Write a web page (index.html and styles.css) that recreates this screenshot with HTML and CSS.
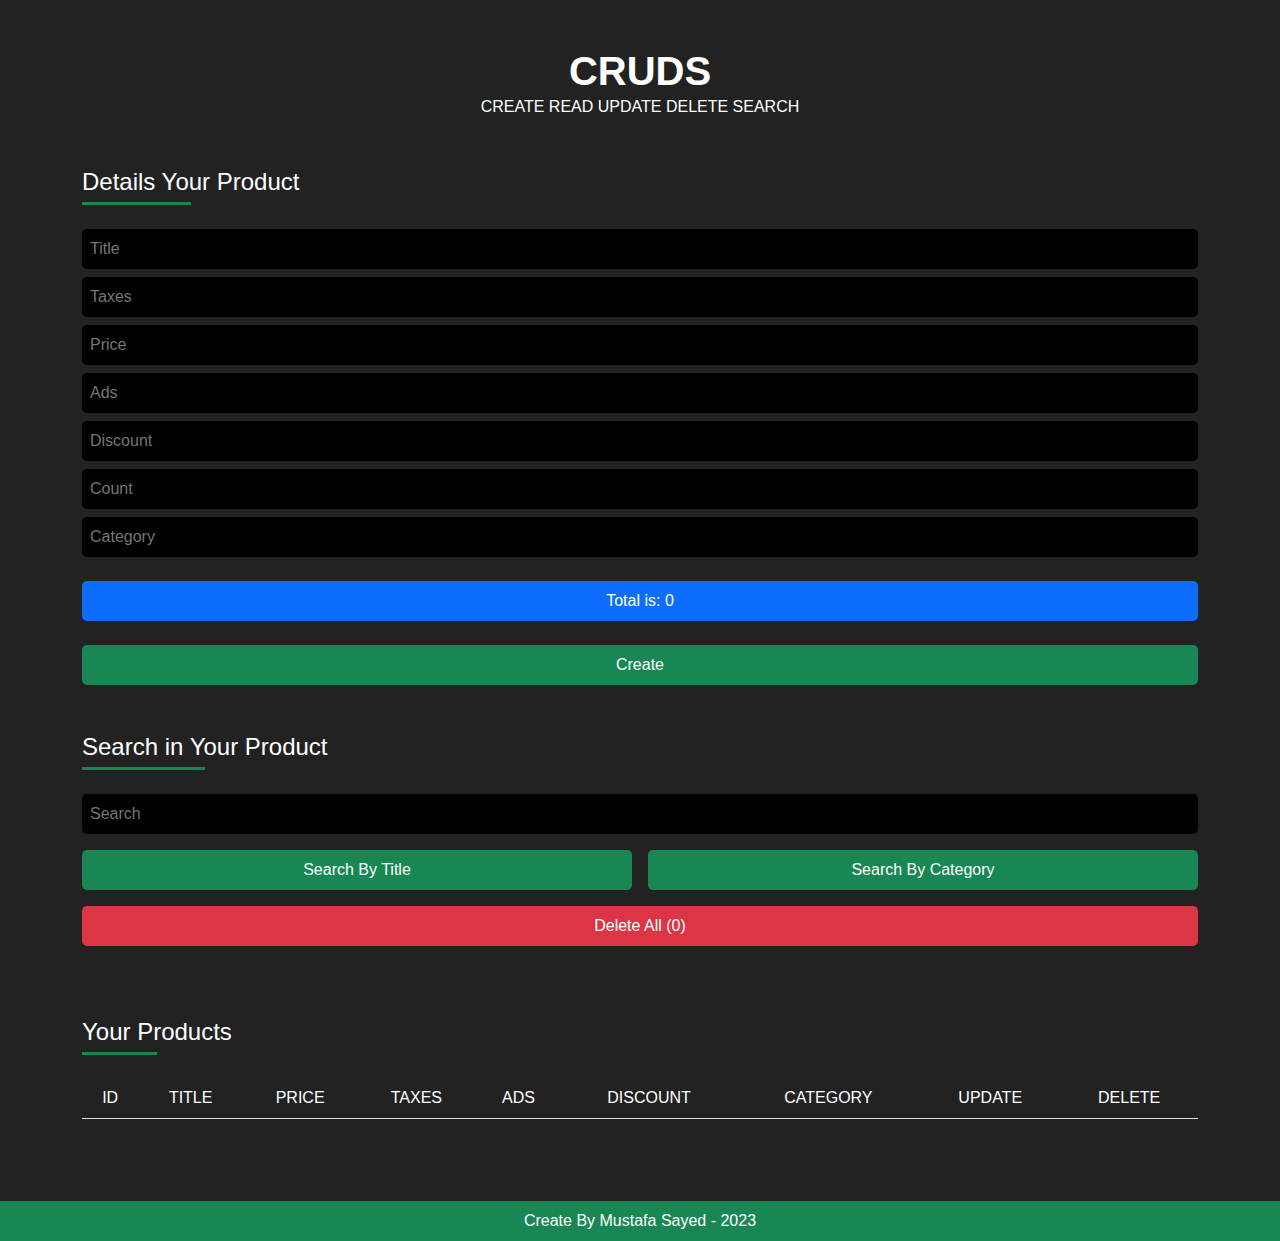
FILE: index.html
```html
<!DOCTYPE html>
<html lang="en">
<head>
<meta charset="UTF-8">
<title>CRUDS</title>
<link rel="stylesheet" href="styles.css">
</head>
<body>
<main class="page">
  <header class="head">
    <h1 class="head-title">CRUDS</h1>
    <p class="head-sub">CREATE READ UPDATE DELETE SEARCH</p>
  </header>

  <section class="block block-details">
    <h2 class="section-title">Details Your Product</h2>
    <div class="fields">
      <input class="field" type="text" placeholder="Title">
      <input class="field" type="text" placeholder="Taxes">
      <input class="field" type="text" placeholder="Price">
      <input class="field" type="text" placeholder="Ads">
      <input class="field" type="text" placeholder="Discount">
      <input class="field" type="text" placeholder="Count">
      <input class="field" type="text" placeholder="Category">
    </div>
    <div class="actions">
      <div class="btn btn-blue">Total is: 0</div>
      <button class="btn btn-green">Create</button>
    </div>
  </section>

  <section class="block block-search">
    <h2 class="section-title">Search in Your Product</h2>
    <div class="search-stack">
      <input class="field" type="text" placeholder="Search">
      <div class="search-row">
        <button class="btn btn-green">Search By Title</button>
        <button class="btn btn-green">Search By Category</button>
      </div>
      <button class="btn btn-red">Delete All (0)</button>
    </div>
  </section>

  <section class="block block-products">
    <h2 class="section-title">Your Products</h2>
    <table class="products">
      <thead>
        <tr>
          <th>id</th>
          <th>title</th>
          <th>price</th>
          <th>taxes</th>
          <th>ads</th>
          <th>discount</th>
          <th>category</th>
          <th>update</th>
          <th>delete</th>
        </tr>
      </thead>
      <tbody></tbody>
    </table>
  </section>
</main>
<footer class="foot">Create By Mustafa Sayed - 2023</footer>
</body>
</html>
```

FILE: styles.css
```css
* {
  box-sizing: border-box;
}

html, body {
  margin: 0;
  padding: 0;
}

body {
  background: #222222;
  color: #ffffff;
  font-family: "Liberation Sans", Arial, sans-serif;
  font-size: 16px;
  min-height: 100vh;
  display: flex;
  flex-direction: column;
}

.page {
  flex: 1;
  width: 1116px;
  margin: 0 auto;
}

.head {
  padding-top: 48px;
  text-align: center;
}

.head-title {
  margin: 0;
  font-size: 40px;
  line-height: 46px;
  font-weight: 700;
}

.head-sub {
  margin: 4px 0 0;
  font-size: 16px;
  line-height: 18px;
}

.block-details {
  margin-top: 52px;
}

.block-search {
  margin-top: 48px;
}

.block-products {
  margin-top: 72px;
}

.section-title {
  display: inline-block;
  margin: 0 0 24px;
  font-size: 24px;
  line-height: 28px;
  font-weight: 400;
}

.section-title::after {
  content: "";
  display: block;
  width: 50%;
  height: 3px;
  margin-top: 6px;
  background: #198754;
}

.fields {
  display: flex;
  flex-direction: column;
  gap: 8px;
}

.field {
  display: block;
  width: 100%;
  height: 40px;
  padding: 0 8px;
  border: none;
  border-radius: 5px;
  background: #000000;
  color: #ffffff;
  font-family: "Liberation Sans", Arial, sans-serif;
  font-size: 16px;
  outline: none;
}

.field::placeholder {
  color: #757575;
}

.actions {
  margin-top: 24px;
  display: flex;
  flex-direction: column;
  gap: 24px;
}

.btn {
  display: flex;
  align-items: center;
  justify-content: center;
  width: 100%;
  height: 40px;
  border: none;
  border-radius: 5px;
  color: #ffffff;
  font-family: "Liberation Sans", Arial, sans-serif;
  font-size: 16px;
  cursor: pointer;
}

.btn-blue {
  background: #0d6efd;
}

.btn-green {
  background: #198754;
}

.btn-red {
  background: #dc3545;
}

.search-stack {
  display: flex;
  flex-direction: column;
  gap: 16px;
}

.search-row {
  display: flex;
  gap: 16px;
}

.search-row .btn {
  flex: 1;
}

.products {
  width: 100%;
  margin-top: -2px;
  border-collapse: collapse;
}

.products thead tr {
  border-bottom: 1px solid #dddddd;
}

.products th {
  padding: 12px 8px 11px;
  font-size: 16px;
  line-height: 18px;
  font-weight: 400;
  text-transform: uppercase;
  text-align: center;
  color: #ffffff;
}

.foot {
  height: 40px;
  display: flex;
  align-items: center;
  justify-content: center;
  background: #198754;
  color: #ffffff;
  font-size: 16px;
}
```
